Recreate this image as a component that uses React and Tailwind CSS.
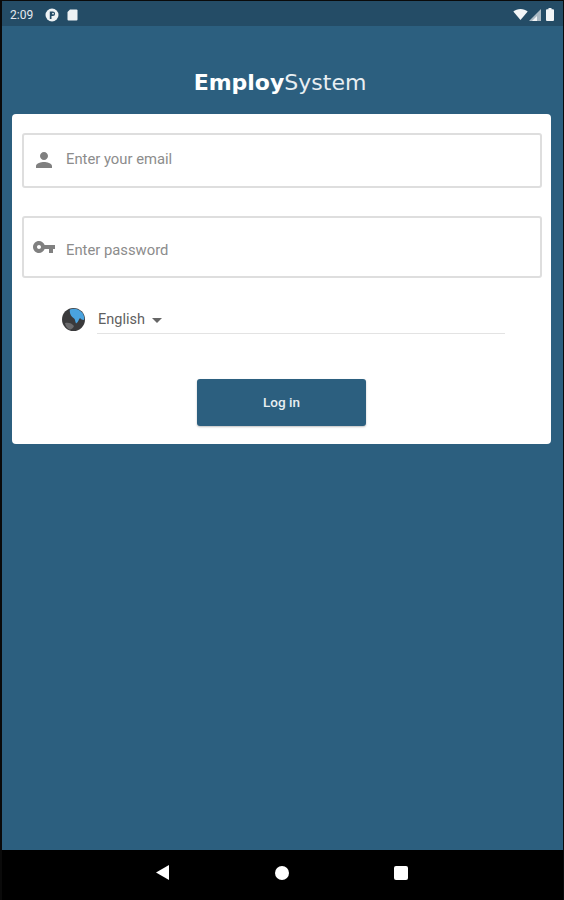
import React from "react";

function StatusBar() {
  return (
    <div className="h-[25px] shrink-0 bg-[#244c66] flex items-center justify-between pl-[8px] pr-[9px] pt-[2px] text-white">
      <div className="flex items-center">
        <span className="text-[12px] text-[#e4eaee] font-['Roboto',sans-serif]">2:09</span>
        <svg className="ml-[12px]" width="14" height="14" viewBox="0 0 14 14">
          <circle cx="7" cy="7" r="6.5" fill="#eef2f4" />
          <path d="M4.800 3.400h3a2.300 2.300 0 0 1 0 4.600H6.500v3H4.800z" fill="#244c66" />
          <circle cx="8" cy="5.600" r="0.900" fill="#eef2f4" />
        </svg>
        <svg className="ml-[8px]" width="11" height="12" viewBox="0 0 11 12">
          <path d="M3 0.500h6.500a1 1 0 0 1 1 1v9a1 1 0 0 1-1 1h-8a1 1 0 0 1-1-1V3z" fill="#eef2f4" />
        </svg>
      </div>
      <div className="flex items-center">
        <svg width="15" height="11" viewBox="0 0 15 11">
          <path d="M0.300 2.600C2.200 1 4.700 0 7.500 0s5.300 1 7.200 2.600L7.500 11z" fill="#f2f5f7" />
        </svg>
        <svg className="ml-[1px]" width="12" height="12" viewBox="0 0 12 12">
          <path d="M0 12L12 0v12z" fill="#aab9c3" />
          <path d="M3 12l5-5v5z" fill="#f2f5f7" />
        </svg>
        <svg className="ml-[5px]" width="8" height="13" viewBox="0 0 8 13">
          <path d="M2.500 0h3v1.200H7a1 1 0 0 1 1 1V12a1 1 0 0 1-1 1H1a1 1 0 0 1-1-1V2.200a1 1 0 0 1 1-1h1.500z" fill="#f2f5f7" />
        </svg>
      </div>
    </div>
  );
}

function Field({ height, icon, placeholder, textClass }) {
  return (
    <div className={`${height} border-2 border-[#dedede] rounded-[3px] flex items-center pl-[8px]`}>
      <div className="w-[34px] shrink-0 flex justify-start">{icon}</div>
      <span className={`text-[14.8px] text-[#8c8c8c] font-['Roboto',sans-serif] ${textClass}`}>{placeholder}</span>
    </div>
  );
}

function Globe() {
  return (
    <svg width="23" height="23" viewBox="0 0 23 23">
      <circle cx="11.500" cy="11.500" r="11.500" fill="#3a3a3c" />
      <path d="M8 1.500c4-1.800 9.500-.5 12.500 3.500 1.500 2.500 2 4.500 1.500 7-2 0-3-1-4-2-1.500 1.500-1.500 4-4 5.500-1-2-.5-4.500-2.500-5.500C9.500 9 7 5 8 1.500z" fill="#4aa3df" />
      <path d="M3 15c3-1 7 0 9 3-1 2.500-3 4-4.500 3.500C5 20.500 3.500 18 3 15z" fill="#6b6b6d" />
    </svg>
  );
}

export default function App() {
  return (
    <div className="w-[564px] h-[900px] bg-[#0a0a0a] flex flex-col pl-[2px] pr-[1px] pt-px font-['Roboto',sans-serif]">
      <StatusBar />
      <main className="flex-1 bg-[#2c5f7f] flex flex-col pl-[10px] pr-[12px]">
        <h1 className="h-[88px] shrink-0 flex items-center justify-center pt-[25px] pr-[3px] text-[22px] text-white font-['DejaVu_Sans',sans-serif]">
          <span className="font-bold">Employ</span>
          <span className="font-normal text-[#e8eef2]">System</span>
        </h1>
        <section className="bg-white rounded-[4px] h-[330px] pt-[19px] pl-[10px] pr-[9px]">
          <Field
            height="h-[55px]"
            placeholder="Enter your email"
            textClass="pb-[3px]"
            icon={
              <svg width="24" height="24" viewBox="0 0 24 24" className="-mt-[2px]" fill="#808080">
                <path d="M12 12c2.210 0 4-1.790 4-4s-1.790-4-4-4-4 1.790-4 4 1.790 4 4 4zm0 2c-2.670 0-8 1.340-8 4v2h16v-2c0-2.660-5.330-4-8-4z" />
              </svg>
            }
          />
          <div className="h-[28px]" />
          <Field
            height="h-[62px]"
            placeholder="Enter password"
            textClass="pt-[7px]"
            icon={
              <svg width="24" height="24" viewBox="0 0 24 24" className="mb-[1px]" fill="#808080">
                <path d="M12.650 10C11.830 7.670 9.610 6 7 6c-3.310 0-6 2.690-6 6s2.690 6 6 6c2.610 0 4.830-1.670 5.650-4H17v4h4v-4h2v-4H12.650zM7 14c-1.100 0-2-.9-2-2s.9-2 2-2 2 .9 2 2-.9 2-2 2z" />
              </svg>
            }
          />
          <div className="mt-[30px] ml-[40px] mr-[37px] flex items-start">
            <Globe />
            <div className="ml-[12px] flex-1 h-[26px] border-b border-[#e3e3e3] flex items-start">
              <span className="text-[14.5px] text-[#5f5f5f] pl-px leading-[23px]">English</span>
              <div className="ml-[7px] mt-[10px] w-0 h-0 border-x-[5px] border-x-transparent border-t-[5px] border-t-[#666666]" />
            </div>
          </div>
          <div className="flex justify-center mt-[45px] pr-[1px]">
            <button className="w-[169px] h-[47px] rounded-[3px] bg-[#2c5f7f] text-[#e8eef2] text-[13.5px] font-medium shadow-[0_1px_2px_rgba(0,0,0,0.25)]">
              Log in
            </button>
          </div>
        </section>
      </main>
      <nav className="h-[50px] shrink-0 bg-black flex items-center justify-center gap-[100px] pb-[5px] pr-[2px]">
        <svg width="13" height="15" viewBox="0 0 14 16"><path d="M14 0v16L0 8z" fill="#ffffff" /></svg>
        <div className="w-[14px] h-[14px] rounded-full bg-white ml-[6px]" />
        <div className="w-[14px] h-[14px] rounded-[2px] bg-white ml-[5px]" />
      </nav>
    </div>
  );
}
